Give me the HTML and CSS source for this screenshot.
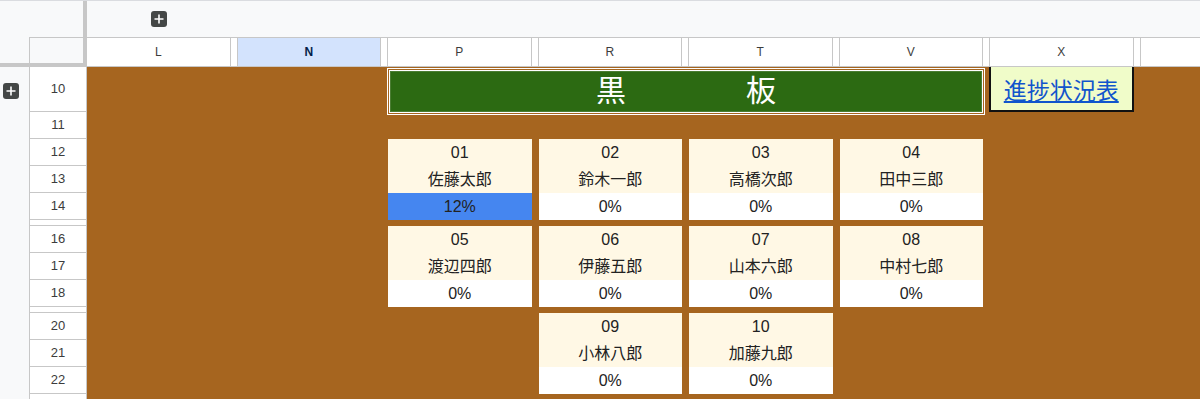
FILE: index.html
```html
<!DOCTYPE html>
<html lang="ja">
<head>
  <meta charset="UTF-8">
  <title>黒板 - 進捗</title>
  <link rel="stylesheet" href="styles.css">
</head>
<body>
  <div class="toolbar">
    <div class="tb-left"></div>
    <div class="freeze-v"></div>
    <div class="tb-right">
      <svg class="plus" width="16" height="16" viewBox="0 0 16 16"><rect width="16" height="16" rx="3" fill="#444746"/><path d="M8 3.5v9M3.5 8h9" stroke="#fff" stroke-width="1.6"/></svg>
    </div>
  </div>

  <div class="headrow">
    <div class="corner">
      <div class="corner-top">
        <div class="corner-strip"></div>
        <div class="corner-cell"></div>
        <div class="freeze-v"></div>
      </div>
      <div class="freeze-h"></div>
    </div>
    <div class="colheads">
      <div class="ch">L</div><div class="ch"></div>
      <div class="ch sel">N</div><div class="ch"></div>
      <div class="ch">P</div><div class="ch"></div>
      <div class="ch">R</div><div class="ch"></div>
      <div class="ch">T</div><div class="ch"></div>
      <div class="ch">V</div><div class="ch"></div>
      <div class="ch">X</div><div class="ch"></div>
      <div class="ch"></div><div class="ch"></div>
    </div>
  </div>

  <div class="body">
    <div class="strip">
      <svg class="plus side" width="16" height="16" viewBox="0 0 16 16"><rect width="16" height="16" rx="3" fill="#444746"/><path d="M8 3.5v9M3.5 8h9" stroke="#fff" stroke-width="1.6"/></svg>
    </div>
    <div class="rowheads">
      <div class="rh tall">10</div>
      <div class="rh">11</div>
      <div class="rh">12</div>
      <div class="rh">13</div>
      <div class="rh">14</div>
      <div class="rh thin"></div>
      <div class="rh">16</div>
      <div class="rh">17</div>
      <div class="rh">18</div>
      <div class="rh thin"></div>
      <div class="rh">20</div>
      <div class="rh">21</div>
      <div class="rh">22</div>
      <div class="rh"></div>
    </div>

    <div class="canvas">
      <div class="board">黒　　　　板</div>
      <div class="linkbox"><a href="#">進捗状況表</a></div>

      <div class="card col-p row-a"><div class="no">01</div><div class="name">佐藤太郎</div><div class="pct done">12%</div></div>
      <div class="card col-r row-a"><div class="no">02</div><div class="name">鈴木一郎</div><div class="pct">0%</div></div>
      <div class="card col-t row-a"><div class="no">03</div><div class="name">高橋次郎</div><div class="pct">0%</div></div>
      <div class="card col-v row-a"><div class="no">04</div><div class="name">田中三郎</div><div class="pct">0%</div></div>

      <div class="card col-p row-b"><div class="no">05</div><div class="name">渡辺四郎</div><div class="pct">0%</div></div>
      <div class="card col-r row-b"><div class="no">06</div><div class="name">伊藤五郎</div><div class="pct">0%</div></div>
      <div class="card col-t row-b"><div class="no">07</div><div class="name">山本六郎</div><div class="pct">0%</div></div>
      <div class="card col-v row-b"><div class="no">08</div><div class="name">中村七郎</div><div class="pct">0%</div></div>

      <div class="card col-r row-c"><div class="no">09</div><div class="name">小林八郎</div><div class="pct">0%</div></div>
      <div class="card col-t row-c"><div class="no">10</div><div class="name">加藤九郎</div><div class="pct">0%</div></div>
    </div>
  </div>
</body>
</html>
```

FILE: styles.css
```css
html, body { height: 399px; }
body { margin: 0; font-family: "Liberation Sans", "Noto Sans CJK JP", sans-serif; background: #f8f9fa; overflow: hidden; }

/* top frozen area */
.toolbar { display: flex; height: 37px; border-top: 1px solid #dadce0; box-sizing: border-box; background: #f8f9fa; }
.tb-left { width: 83px; }
.freeze-v { width: 4px; background: #c7c7c7; }
.tb-right { flex: 1; padding: 10px 0 0 64px; }
.plus { display: block; }

.headrow { display: flex; height: 30px; }
.corner { width: 87px; display: flex; flex-direction: column; }
.corner-top { display: flex; height: 26px; }
.corner-strip { width: 29px; }
.corner-cell { width: 54px; border-left: 1px solid #c7c7c7; border-top: 1px solid #c7c7c7; box-sizing: border-box; }
.freeze-h { height: 4px; background: #c7c7c7; }

.colheads { flex: 1; display: grid; grid-template-columns: repeat(8, 143.5px 7px); overflow: hidden; border-top: 1px solid #c7c7c7; border-bottom: 1px solid #c7c7c7; }
.ch { background: #fff; border-right: 1px solid #c7c7c7; font-size: 12px; color: #3c3c3c; text-align: center; line-height: 28px; }
.ch.sel { background: #d3e3fd; color: #041e49; font-weight: bold; }

/* rows */
.body { display: flex; height: 332px; overflow: hidden; }
.strip { width: 29px; padding: 16px 0 0 3px; box-sizing: border-box; }
.rowheads { width: 58px; display: flex; flex-direction: column; }
.rh { flex: none; height: 27px; box-sizing: border-box; background: #fff; border: 1px solid #c7c7c7; border-top: none; font-size: 13px; color: #3c3c3c; text-align: center; line-height: 26px; overflow: hidden; }
.rh.tall { height: 45px; line-height: 44px; }
.rh.thin { height: 6px; }

.canvas { flex: 1; overflow: hidden; background: #a6651f; display: grid;
  grid-template-columns: repeat(8, 143.5px 7px);
  grid-template-rows: 45px 27px 27px 27px 27px 6px 27px 27px 27px 6px 27px 27px 27px 27px; }

.board { grid-column: 5 / 12; grid-row: 1; align-self: start; height: 47px; margin: 1px -2px 0 -1px; box-sizing: border-box;
  border: 3px double #fff; background: #2c6a12; background-clip: padding-box; box-shadow: inset 0 0 0 1px #4b7d33;
  color: #fff; font-size: 30px; text-align: center; line-height: 40px; }

.linkbox { grid-column: 13; grid-row: 1; margin-left: -1px; background: #f0fcc9; border: 2px solid #111; border-top: none;
  display: flex; align-items: center; justify-content: center; }
.linkbox a { color: #1155cc; font-size: 23px; text-decoration: underline; }

/* student cards */
.card { display: flex; flex-direction: column; text-align: center; font-size: 16px; color: #222; }
.card div { height: 27px; line-height: 28px; }
.card .no, .card .name { background: #fff8e5; }
.card .pct { background: #fff; }
.card .pct.done { background: #4586f0; }
.col-p { grid-column: 5; }
.col-r { grid-column: 7; }
.col-t { grid-column: 9; }
.col-v { grid-column: 11; }
.row-a { grid-row: 3 / span 3; }
.row-b { grid-row: 7 / span 3; }
.row-c { grid-row: 11 / span 3; }
```
